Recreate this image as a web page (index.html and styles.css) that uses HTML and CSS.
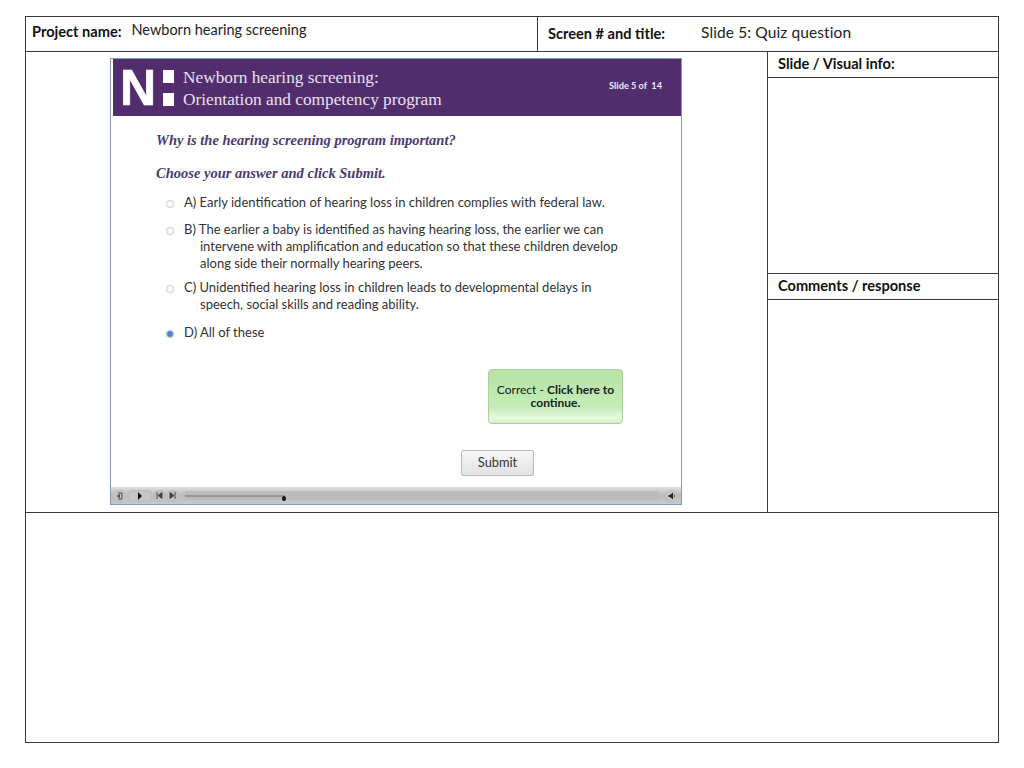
FILE: index.html
```html
<!DOCTYPE html>
<html lang="en">
<head>
<meta charset="utf-8">
<title>Storyboard</title>
<link rel="stylesheet" href="styles.css">
</head>
<body>
<div class="board">
  <div class="header">
    <div class="head-cell head-project">
      <span class="label">Project name:</span>
      <span class="value">Newborn hearing screening</span>
    </div>
    <div class="head-cell head-screen">
      <span class="label label-screen">Screen # and title:</span>
      <span class="value value-screen">Slide 5: Quiz question</span>
    </div>
  </div>
  <div class="main">
    <div class="stage">
      <div class="slide">
        <div class="banner">
          <div class="logo">
            <span class="logo-n">N</span>
            <span class="logo-dots"><i></i><i></i></span>
          </div>
          <div class="banner-title">Newborn hearing screening:<br>Orientation and competency program</div>
          <div class="banner-count">Slide 5 of&nbsp; 14</div>
        </div>
        <div class="content">
          <p class="question q1">Why is the hearing screening program important?</p>
          <p class="question q2">Choose your answer and click Submit.</p>
          <div class="answer a-a"><span class="radio"></span><p>A) Early identification of hearing loss in children complies with federal law.</p></div>
          <div class="answer a-b"><span class="radio"></span><p>B) The earlier a baby is identified as having hearing loss, the earlier we can<br><span class="indent">intervene with amplification and education so that these children develop</span><br><span class="indent">along side their normally hearing peers.</span></p></div>
          <div class="answer a-c"><span class="radio"></span><p>C) Unidentified hearing loss in children leads to developmental delays in<br><span class="indent">speech, social skills and reading ability.</span></p></div>
          <div class="answer a-d"><span class="radio radio-on"></span><p>D) All of these</p></div>
          <div class="feedback"><span><span class="fb-light">Correct - </span>Click here to<br>continue.</span></div>
          <div class="submit">Submit</div>
        </div>
        <div class="player">
          <span class="pbtn"><svg width="8" height="8" viewBox="0 0 8 8"><path d="M2 1h4v6H2M3.500 2.500L1 4l2.500 1.500z" fill="none" stroke="#444" stroke-width="1"/></svg></span>
          <span class="pbtn pbtn-play"><svg width="6" height="8" viewBox="0 0 6 8"><path d="M1 0l4 4-4 4z" fill="#111"/></svg></span>
          <span class="pbtn pbtn-sm"><svg width="7" height="7" viewBox="0 0 7 7"><path d="M1 0v7M6 0.500L2 3.500l4 3z" stroke="#444" fill="#444"/></svg></span>
          <span class="pbtn pbtn-sm"><svg width="7" height="7" viewBox="0 0 7 7"><path d="M6 0v7M1 0.500l4 3-4 3z" stroke="#444" fill="#444"/></svg></span>
          <span class="track"><span class="track-fill"></span><span class="thumb"></span></span>
          <span class="pbtn pbtn-vol"><svg width="8" height="8" viewBox="0 0 8 8"><path d="M0.500 3h1.500L5 0.500v7L2 5H0.500z" fill="#222"/><path d="M6 2.500a2 2 0 0 1 0 3" stroke="#555" fill="none"/></svg></span>
        </div>
      </div>
    </div>
    <div class="side">
      <div class="side-title">Slide / Visual info:</div>
      <div class="side-body side-body-top"></div>
      <div class="side-title side-title-mid">Comments / response</div>
      <div class="side-body"></div>
    </div>
  </div>
  <div class="notes"></div>
</div>
</body>
</html>
```
FILE: styles.css
```css
* { box-sizing: border-box; }
html, body { margin: 0; padding: 0; background: #fff; }
body {
  width: 1024px;
  height: 768px;
  padding: 16px 25px 0;
  font-family: "Lato", "Liberation Sans", sans-serif;
  color: #1a1a1a;
  overflow: hidden;
}
p { margin: 0; }
.board {
  width: 974px;
  height: 727px;
  border: 1px solid #3a3a3a;
  display: flex;
  flex-direction: column;
}
.header { display: flex; height: 34px; flex: none; }
.head-cell { position: relative; display: flex; }
.head-project { width: 512px; padding-left: 6px; border-right: 1px solid #3a3a3a; }
.head-screen { flex: 1; padding-left: 10px; }
.label { font-weight: 700; font-size: 14.600px; line-height: 17px; margin-top: 6px; color: #111; }
.label-screen { margin-top: 8px; }
.value { font-size: 14.500px; line-height: 18px; margin: 4px 0 0 10px; color: #222; }
.value-screen { font-size: 15.500px; margin: 6px 0 0 36px; letter-spacing: 0.100px; }
.main { display: flex; height: 462px; flex: none; border-top: 1px solid #3a3a3a; border-bottom: 1px solid #3a3a3a; }
.stage { width: 742px; flex: none; padding: 6px 0 0 84px; border-right: 1px solid #3a3a3a; }
.slide {
  width: 572px;
  height: 447px;
  border: 1px solid #7f9cc0;
  background: #fff;
  display: flex;
  flex-direction: column;
}
.banner {
  height: 57px;
  flex: none;
  margin-left: 2px;
  background: #512d6d;
  display: flex;
  color: #fff;
}
.logo { width: 70px; flex: none; display: flex; padding: 11px 0 0 7px; }
.logo-n {
  font-family: "Liberation Sans", sans-serif;
  font-weight: 700;
  font-size: 50px;
  line-height: 36px;
  height: 36px;
  letter-spacing: -1px;
  -webkit-text-stroke: 0.700px #fff;
}
.logo-dots { display: flex; flex-direction: column; gap: 10px; margin: 0 0 0 8px; }
.logo-dots i { display: block; width: 11px; height: 13px; background: #fff; }
.banner-title {
  font-family: "Liberation Serif", serif;
  font-size: 17.300px;
  line-height: 22px;
  padding-top: 8px;
  color: #e9e1ee;
  flex: 1;
}
.banner-count {
  font-family: "Lato", sans-serif;
  font-weight: 700;
  font-size: 9.200px;
  padding: 21px 19px 0 0;
  color: #efe9f3;
}
.content { flex: 1; position: relative; min-height: 0; padding-left: 45px; }
.question {
  font-family: "Liberation Serif", serif;
  font-style: italic;
  font-weight: 700;
  font-size: 14.500px;
  line-height: 16px;
  color: #4b3a70;
}
.q1 { padding-top: 16px; }
.q2 { padding-top: 17px; }
.answer {
  display: flex;
  font-size: 13px;
  line-height: 17px;
  color: #333;
  margin-left: 10px;
}
.answer p { margin-left: 10px; white-space: nowrap; }
.indent { padding-left: 16px; }
.a-a { margin-top: 13px; }
.a-b { margin-top: 10px; }
.a-c { margin-top: 7px; }
.a-d { margin-top: 11px; }
.radio {
  flex: none;
  width: 8px;
  height: 8px;
  margin-top: 6px;
  border-radius: 50%;
  border: 1px solid #d6d6d6;
  background: #fbfbfb;
  box-shadow: 0 0 1px #ddd;
}
.radio-on { background: #4a86c5; border-color: #c4d6e8; }
.feedback {
  position: absolute;
  left: 377px;
  top: 253px;
  width: 135px;
  height: 55px;
  padding-bottom: 2px;
  border: 1px solid #a9cf9e;
  border-radius: 4px;
  background: linear-gradient(#b6e3a4, #c5ecb6 70%, #e7f8df 90%, #d3f0c8);
  display: flex;
  align-items: center;
  justify-content: center;
  text-align: center;
  font-size: 12px;
  line-height: 13px;
  font-weight: 700;
  color: #122;
}
.fb-light { font-weight: 400; }
.submit {
  position: absolute;
  left: 350px;
  top: 334px;
  width: 73px;
  height: 26px;
  border: 1px solid #b9b9b9;
  border-radius: 2px;
  background: linear-gradient(#f7f7f7, #e2e2e2);
  text-align: center;
  font-size: 12.800px;
  line-height: 22px;
  color: #333;
}
.player {
  flex: none;
  height: 17px;
  background: linear-gradient(#dedede, #bcbcbc 50%, #c9c9c9);
  display: flex;
  align-items: center;
  padding: 0 3px;
  gap: 2px;
}
.pbtn {
  width: 12px;
  height: 12px;
  border-radius: 4px;
  background: #c6c6c6;
  border: 1px solid #bbb;
  display: flex;
  align-items: center;
  justify-content: center;
  flex: none;
}
.pbtn svg { display: block; }
.pbtn-play { width: 24px; }
.pbtn-sm { width: 11px; }
.pbtn-vol { border-radius: 50%; width: 13px; margin-left: 3px; }
.track {
  flex: 1;
  height: 9px;
  margin-left: 3px;
  background: #bcbcbc;
  border-radius: 4px;
  position: relative;
}
.track-fill {
  position: absolute;
  left: 2px;
  top: 4px;
  width: 100px;
  height: 2px;
  background: #959595;
}
.thumb {
  position: absolute;
  left: 99px;
  top: 5px;
  width: 4px;
  height: 5px;
  border-radius: 50%;
  background: #111;
}
.side { flex: 1; display: flex; flex-direction: column; }
.side-title {
  height: 26px;
  flex: none;
  padding: 3px 0 0 10px;
  font-weight: 700;
  font-size: 14.600px;
  line-height: 17px;
  color: #111;
  border-bottom: 1px solid #3a3a3a;
}
.side-body { flex: 1; }
.side-body-top { flex: none; height: 196px; border-bottom: 1px solid #3a3a3a; }
.notes { flex: 1; }
```
